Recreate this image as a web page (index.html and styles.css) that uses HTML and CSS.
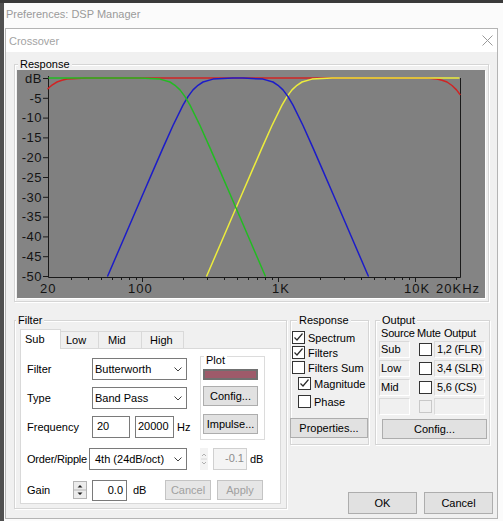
FILE: index.html
```html
<!DOCTYPE html>
<html>
<head>
<meta charset="utf-8">
<title>Crossover</title>
<link rel="stylesheet" href="styles.css">
</head>
<body>
<div class="desk-top"></div>
<div class="screen">
  <div class="desk-left"></div>
  <div class="outer">
    <div class="outer-title">Preferences: DSP Manager</div>
    <div class="dialog">
      <div class="dlg-title">
        <span>Crossover</span>
        <svg class="close" viewBox="0 0 11 11" width="11" height="11"><path d="M0.5 0.5 L10.5 10.5 M10.5 0.5 L0.5 10.5" stroke="#9a9a9a" stroke-width="1" fill="none"/></svg>
      </div>
      <div class="client">
        <div class="group rgroup">
          <div class="glabel rlabel">Response</div>
          <div class="graph">
            <svg viewBox="17 70 468 228" width="468" height="228">
              <rect x="17" y="70" width="468" height="228" fill="#848484"/>
              <rect x="48" y="78" width="412" height="199" fill="#808080"/>
              <g stroke="#1a1a1a" stroke-width="1" fill="none">
                <path d="M48.5 76 V277.5 H460.5 V78"/>
                <path d="M43 78.5 H48 M43 98.3 H48 M43 118.1 H48 M43 137.9 H48 M43 157.7 H48 M43 177.5 H48 M43 197.3 H48 M43 217.1 H48 M43 236.9 H48 M43 256.7 H48 M43 276.5 H48"/>
                <path d="M71.5 277 V280 M88.5 277 V280 M101.5 277 V280 M112.5 277 V280 M121.5 277 V280 M129.5 277 V280 M136.5 277 V280 M142.5 277 V282 M183.5 277 V280 M207.5 277 V280 M224.5 277 V280 M237.5 277 V280 M248.5 277 V280 M257.5 277 V280 M265.5 277 V280 M272.5 277 V280 M278.5 277 V282 M320.5 277 V280 M344.5 277 V280 M361.5 277 V280 M374.5 277 V280 M385.5 277 V280 M394.5 277 V280 M402.5 277 V280 M409.5 277 V280 M415.5 277 V282 M456.5 277 V280"/>
              </g>
              <g font-family="Liberation Sans, Arial, sans-serif" font-size="13" fill="#141414" text-anchor="end" letter-spacing="0.5">
                <text x="42" y="83">dB</text>
                <text x="42" y="102.5">-5</text>
                <text x="42" y="122.3">-10</text>
                <text x="42" y="142.1">-15</text>
                <text x="42" y="161.9">-20</text>
                <text x="42" y="181.7">-25</text>
                <text x="42" y="201.5">-30</text>
                <text x="42" y="221.3">-35</text>
                <text x="42" y="241.1">-40</text>
                <text x="42" y="260.9">-45</text>
                <text x="42" y="280.5">-50</text>
              </g>
              <g font-family="Liberation Sans, Arial, sans-serif" font-size="13" fill="#141414" letter-spacing="1">
                <text x="40" y="293">20</text>
                <text x="128" y="293">100</text>
                <text x="272" y="293">1K</text>
                <text x="404" y="293">10K</text>
                <text x="436" y="293">20KHz</text>
              </g>
              <g fill="none" stroke-width="1.5" stroke-linejoin="round" stroke-linecap="round">
                <polyline stroke="#d02424" points="48,88.8 50,86.8 52,85.1 57,82 62,80.2 67,79.1 77,78.4 87,78.1 427,78.1 437,79.1 442,80.2 447,82 452,85.5 456.5,89.9 460,94.5"/>
                <polyline stroke="#ecec3c" points="206.7,276 222,240.5 232,217.2 242,194 252,170.9 262,147.9 272,125.5 282,105.2 287,96.6 292,89.9 297,85.3 302,82 312,79.1 332,78.1 459,78.1"/>
                <polyline stroke="#1c1cc8" points="107.7,276 123,240.5 133,217.2 143,194 153,170.9 163,147.9 173,125.5 183,105.2 188,96.6 193,89.9 198,85.3 203,82 213,79.1 233,78.1 243,78.1 263,79.1 273,82 278,85.3 283,89.9 288,96.6 293,105.2 303,125.5 313,147.9 323,170.9 333,194 343,217.2 353,240.5 368.3,276"/>
                <polyline stroke="#22bb22" points="49,78.1 140,78.1 160,79.1 170,82 175,85.3 180,89.9 185,96.6 190,105.2 200,125.5 210,147.9 220,170.9 230,194 240,217.2 250,240.5 265.3,276"/>
              </g>
            </svg>
          </div>
        </div>

        <div class="lower">
          <div class="group fgroup">
            <div class="glabel flabel">Filter</div>
            <div class="tabs">
              <div class="tab active t-sub">Sub</div>
              <div class="tab t-low">Low</div>
              <div class="tab t-mid">Mid</div>
              <div class="tab t-high">High</div>
            </div>
            <div class="panel">
              <div class="upper">
                <div class="fields">
                  <div class="frow">
                    <span class="lbl">Filter</span>
                    <div class="combo"><span>Butterworth</span><svg class="chev" viewBox="0 0 8 5" width="8" height="5"><polyline points="0.5,0.5 4,4 7.5,0.5" fill="none" stroke="#404040"/></svg></div>
                  </div>
                  <div class="frow">
                    <span class="lbl">Type</span>
                    <div class="combo"><span>Band Pass</span><svg class="chev" viewBox="0 0 8 5" width="8" height="5"><polyline points="0.5,0.5 4,4 7.5,0.5" fill="none" stroke="#404040"/></svg></div>
                  </div>
                  <div class="frow">
                    <span class="lbl">Frequency</span>
                    <div class="input w38">20</div>
                    <div class="input w39 ml5">20000</div>
                    <span class="unit">Hz</span>
                  </div>
                </div>
                <div class="group plotg">
                  <div class="glabel plabel">Plot</div>
                  <div class="swatch"></div>
                  <div class="btn pbtn mt6">Config...</div>
                  <div class="btn pbtn mt8">Impulse...</div>
                </div>
              </div>
              <div class="frow row4">
                <span class="lbl lbl62">Order/Ripple</span>
                <div class="combo combo98"><span>4th (24dB/oct)</span><svg class="chev" viewBox="0 0 8 5" width="8" height="5"><polyline points="0.5,0.5 4,4 7.5,0.5" fill="none" stroke="#404040"/></svg></div>
                <svg class="dspin" viewBox="0 0 8 22" width="8" height="22"><rect x="0" y="0" width="8" height="22" fill="#f3f3f3"/><path d="M2 8 L4 6 L6 8 M2 14 L4 16 L6 14" stroke="#b0b0b0" fill="none"/><path d="M1 11 H7" stroke="#d6d6d6"/></svg>
                <div class="input dis w34">-0.1</div>
                <span class="unit ml5">dB</span>
              </div>
              <div class="frow row5">
                <span class="lbl lbl46">Gain</span>
                <svg class="spin" viewBox="0 0 14 18" width="14" height="18"><rect x="0.5" y="0.5" width="13" height="17" fill="#ececec" stroke="#b4b4b4"/><path d="M1 9 H13" stroke="#b4b4b4"/><path d="M4.5 6.5 L7 4 L9.5 6.5 Z M4.5 11.5 L7 14 L9.5 11.5 Z" fill="#202020"/></svg>
                <div class="input w35 ml5 right">0.0</div>
                <span class="unit db">dB</span>
                <div class="btn dbtn cancel">Cancel</div>
                <div class="btn dbtn apply">Apply</div>
              </div>
            </div>
          </div>

          <div class="rcol">
            <div class="grow">
              <div class="group respg">
                <div class="glabel resplabel">Response</div>
                <div class="chk first"><span class="box on"><svg viewBox="0 0 13 13" width="13" height="13"><path d="M2.5 6.5 L5 9 L10.5 2.5" fill="none" stroke="#2a2a2a" stroke-width="1.2"/></svg></span><span>Spectrum</span></div>
                <div class="chk"><span class="box on"><svg viewBox="0 0 13 13" width="13" height="13"><path d="M2.5 6.5 L5 9 L10.5 2.5" fill="none" stroke="#2a2a2a" stroke-width="1.2"/></svg></span><span>Filters</span></div>
                <div class="chk"><span class="box"></span><span>Filters Sum</span></div>
                <div class="chk ind mt1"><span class="box on"><svg viewBox="0 0 13 13" width="13" height="13"><path d="M2.5 6.5 L5 9 L10.5 2.5" fill="none" stroke="#2a2a2a" stroke-width="1.2"/></svg></span><span>Magnitude</span></div>
                <div class="chk ind mt3"><span class="box"></span><span>Phase</span></div>
                <div class="btn propbtn">Properties...</div>
              </div>
              <div class="group outg">
                <div class="glabel outlabel">Output</div>
                <div class="ohead"><span class="h-src">Source</span><span class="h-mute">Mute</span><span>Output</span></div>
                <div class="orow first"><span class="cell src">Sub</span><span class="box mute"></span><span class="cell out">1,2 (FLR)</span></div>
                <div class="orow"><span class="cell src">Low</span><span class="box mute"></span><span class="cell out">3,4 (SLR)</span></div>
                <div class="orow"><span class="cell src">Mid</span><span class="box mute"></span><span class="cell out">5,6 (CS)</span></div>
                <div class="orow"><span class="cell src"></span><span class="box mute disbox"></span><span class="cell out"></span></div>
                <div class="btn ocfg">Config...</div>
              </div>
            </div>
            <div class="brow">
              <div class="btn big">OK</div>
              <div class="btn big ml7">Cancel</div>
            </div>
          </div>
        </div>
      </div>
    </div>
  </div>
</div>
</body>
</html>
```
FILE: styles.css
```css
* { box-sizing: border-box; }
html, body { margin: 0; padding: 0; }
body {
  width: 503px;
  height: 521px;
  overflow: hidden;
  background: #fbfbfb;
  font-family: "Liberation Sans", Arial, sans-serif;
  font-size: 11px;
  color: #000;
  white-space: nowrap;
}
.desk-top { height: 3px; background: #3a3a3a; }
.screen { display: flex; height: 518px; }
.desk-left { width: 4px; background: #505050; }
.outer { flex: 1; background: #fbfbfb; }
.outer-title {
  height: 25px;
  line-height: 22px;
  padding-left: 2px;
  color: #9a9a9a;
}
.dialog {
  margin-left: 1px;
  width: 493px;
  border: 1px solid #b4b4b4;
  background: #f0f0f0;
}
.dlg-title {
  height: 23px;
  background: #fff;
  display: flex;
  align-items: center;
  padding-left: 3px;
  color: #a3a3a3;
}
.close { margin-left: auto; margin-right: 4px; display: block; }
.client { height: 466px; padding: 12px 0 0 8px; }

.group {
  border: 1px solid #d5d5d5;
  box-shadow: inset 1px 1px 0 #fff, 1px 1px 0 #fff;
}
.glabel {
  display: block;
  width: max-content;
  height: 12px;
  line-height: 12px;
  margin-top: -7px;
  padding: 0 2px;
  background: #f0f0f0;
}
.rgroup { width: 475px; height: 238px; }
.rlabel { margin-left: 3px; }
.graph {
  width: 468px;
  height: 228px;
  margin-left: 2px;
  box-shadow: 1px 1px 0 #fff;
}
.graph svg { display: block; }

.lower { display: flex; margin-top: 18px; }

.fgroup { width: 273px; height: 189px; }
.flabel { margin-left: 1px; }
.tabs {
  display: flex;
  align-items: flex-end;
  height: 19px;
  margin: 3px 0 0 5px;
}
.tab {
  height: 17px;
  line-height: 16px;
  border: 1px solid #d9d9d9;
  border-bottom: none;
  background: #f0f0f0;
  margin-left: -1px;
}
.tab.active {
  height: 20px;
  line-height: 18px;
  margin-left: 0;
  margin-bottom: -1px;
  background: #fff;
  position: relative;
  z-index: 1;
}
.t-sub { width: 41px; padding-left: 4px; }
.t-low { width: 39px; padding-left: 5px; }
.t-mid { width: 44px; padding-left: 9px; }
.t-high { width: 43px; padding-left: 8px; }
.panel {
  width: 261px;
  height: 156px;
  margin-left: 5px;
  border: 1px solid #d9d9d9;
  background: #fff;
  padding: 9px 0 0 6px;
}
.upper { display: flex; align-items: flex-start; }
.fields { width: 173px; }
.frow { display: flex; align-items: center; height: 22px; }
.fields .frow + .frow { margin-top: 7px; }
.lbl { width: 65px; }
.lbl62 { width: 62px; letter-spacing: -0.2px; }
.lbl46 { width: 46px; }
.combo {
  width: 95px;
  height: 22px;
  border: 1px solid #7a7a7a;
  background: #fff;
  display: flex;
  align-items: center;
  justify-content: space-between;
  padding: 0 4px 0 2px;
}
.combo98 { width: 98px; padding-left: 5px; }
.chev { display: block; }
.input {
  height: 22px;
  border: 1px solid #7a7a7a;
  background: #fff;
  line-height: 18px;
  padding: 0 2px 0 4px;
}
.w38 { width: 38px; }
.w39 { width: 39px; padding-left: 2px; }
.w34 { width: 34px; }
.w35 { width: 35px; height: 21px; }
.ml5 { margin-left: 5px; }
.ml7 { margin-left: 7px; }
.mt1 { margin-top: 1px; }
.mt3 { margin-top: 3px; }
.mt6 { margin-top: 6px; }
.mt8 { margin-top: 8px; }
.right { text-align: right; padding-right: 3px; }
.unit { margin-left: 3px; }
.dis {
  background: #f4f4f4;
  border-color: #d0d0d0;
  color: #8d8d8d;
  text-align: right;
  margin-left: 5px;
}
.dspin { display: block; margin-left: 13px; }
.spin { display: block; }
.db { width: 14px; margin-left: 6px; }

.plotg {
  width: 65px;
  height: 84px;
  margin-top: -2px;
  padding-left: 2px;
  border-color: #dcdcdc;
}
.plabel { margin-top: -3px; margin-left: 1px; background: #fff; }
.swatch {
  width: 55px;
  height: 11px;
  margin-top: 3px;
  background: #9e5a6a;
  border: 2px solid #707070;
}

.btn {
  height: 20px;
  border: 1px solid #adadad;
  background: #e1e1e1;
  display: flex;
  align-items: center;
  justify-content: center;
}
.pbtn { width: 55px; }
.row4 { margin-top: 8px; }
.row5 { margin-top: 9px; }
.dbtn {
  width: 46px;
  color: #a0a0a0;
  background: #e6e6e6;
  border-color: #c4c4c4;
}
.cancel { margin-left: 18px; }
.apply { margin-left: 6px; }

.rcol { margin-left: 3px; display: flex; flex-direction: column; }
.grow { display: flex; }
.respg { width: 79px; height: 125px; }
.resplabel { margin-left: 6px; }
.chk {
  display: flex;
  align-items: center;
  height: 15px;
  padding-left: 1px;
}
.chk.first { margin-top: 4px; }
.chk.ind { padding-left: 7px; }
.box {
  width: 13px;
  height: 13px;
  border: 1px solid #333;
  background: #fff;
  margin-right: 3px;
  flex: none;
  display: block;
}
.box svg { display: block; margin: -1px 0 0 -1px; }
.propbtn { width: 78px; margin: 9px 0 0 -1px; }

.outg { width: 115px; height: 125px; margin-left: 6px; }
.outlabel { margin-left: 4px; }
.ohead {
  display: flex;
  height: 12px;
  line-height: 12px;
  margin-top: 1px;
  padding-left: 5px;
  letter-spacing: -0.2px;
}
.h-src { width: 36px; }
.h-mute { width: 27px; }
.orow {
  display: flex;
  align-items: center;
  height: 17px;
  margin-top: 2px;
  padding-left: 3px;
}
.cell {
  height: 17px;
  line-height: 15px;
  border: 1px solid #dadada;
  border-right-color: #fff;
  border-bottom-color: #fff;
  overflow: visible;
}
.src { width: 31px; padding-left: 1px; }
.out { width: 51px; padding-left: 2px; margin-left: 2px; letter-spacing: -0.2px; }
.mute { margin-left: 9px; margin-right: 0; }
.disbox { background: #f0f0f0; border-color: #c8c8c8; }
.ocfg { width: 105px; margin: 4px 0 0 6px; }

.brow { display: flex; margin-top: 47px; padding-left: 58px; }
.big { width: 69px; height: 22px; }
```
